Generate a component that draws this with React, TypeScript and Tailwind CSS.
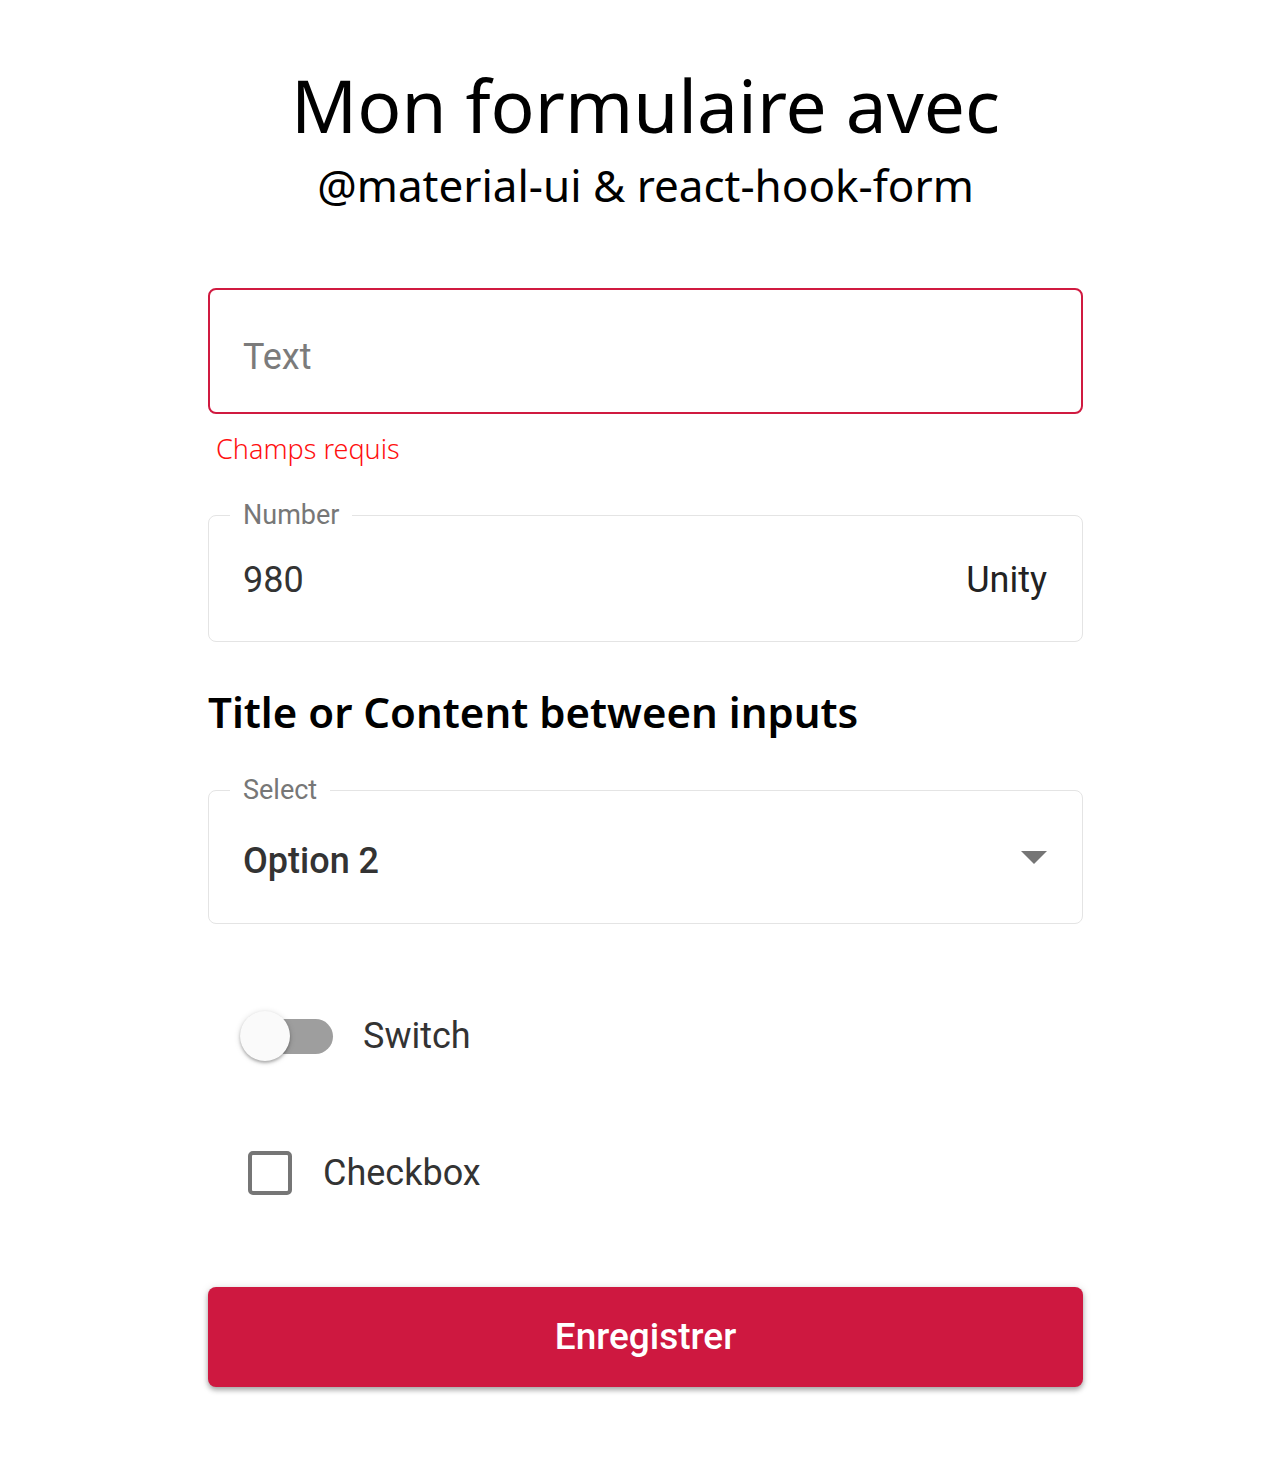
import React from "react";

const seg = { fontFamily: '"Noto Sans", "Open Sans", sans-serif' };
const rob = { fontFamily: 'Roboto, "Liberation Sans", sans-serif' };

function Outlined({
  label,
  children,
  className,
}: {
  label: string;
  children: React.ReactNode;
  className: string;
}) {
  return (
    <div className={"relative rounded-[8px] border border-[#e4e4e4] " + className}>
      <span
        className="absolute -top-[17px] left-[21px] bg-white px-[13px] text-[27px] leading-[32px] text-[#777777]"
        style={rob}
      >
        {label}
      </span>
      {children}
    </div>
  );
}

export default function App() {
  return (
    <div className="min-h-[1477px] w-full bg-white">
      <div className="ml-[208px] w-[875px] pt-[59px]">
        <h1 className="text-center text-[73px] leading-[92px] text-black" style={seg}>
          Mon formulaire avec
        </h1>
        <h2 className="mt-[8px] text-center text-[44px] leading-[52px] text-black" style={seg}>
          @material-ui &amp; react-hook-form
        </h2>

        <div className="mt-[77px] flex h-[126px] items-center rounded-[8px] border-2 border-[#d01a40] pl-[33px] pt-[12px]">
          <span className="text-[36px] text-[#7b7b7b]" style={rob}>
            Text
          </span>
        </div>
        <div className="mt-[17px] pl-[8px] text-[27px] font-light leading-[36px] text-[#ff1010]" style={seg}>
          Champs requis
        </div>

        <Outlined label="Number" className="mt-[48px] flex h-[127px] items-center justify-between pl-[34px] pr-[35px] pt-[2px]">
          <span className="text-[36px] text-[#333333]" style={rob}>
            980
          </span>
          <span className="text-[36px] text-[#222222]" style={rob}>
            Unity
          </span>
        </Outlined>

        <h3 className="mt-[42px] text-[42px] font-semibold leading-[56px] text-black" style={seg}>
          Title or Content between inputs
        </h3>

        <Outlined label="Select" className="mt-[50px] flex h-[134px] items-center justify-between pl-[34px] pr-[35px] pt-[8px]">
          <span className="text-[36px] font-medium text-[#333333]" style={rob}>
            Option 2
          </span>
          <svg width="26" height="13" viewBox="0 0 26 13" className="mt-[-8px]">
            <polygon points="0,0 26,0 13,13" fill="#757575" />
          </svg>
        </Outlined>

        <div className="mt-[85px] flex items-center pl-[32px]">
          <div className="relative h-[52px] w-[101px]">
            <div className="absolute left-[28px] top-[9px] h-[35px] w-[65px] rounded-full bg-[#9e9e9e]" />
            <div className="absolute left-0 top-[1px] h-[50px] w-[50px] rounded-full bg-[#fafafa] shadow-[0_2px_3px_rgba(0,0,0,0.25),0_1px_6px_rgba(0,0,0,0.15)]" />
          </div>
          <span className="ml-[22px] text-[36px] text-[#333333]" style={rob}>
            Switch
          </span>
        </div>

        <div className="mt-[83px] flex items-center pl-[40px]">
          <div className="h-[44px] w-[44px] rounded-[5px] border-[4px] border-[#767676]" />
          <span className="ml-[31px] text-[36px] text-[#333333]" style={rob}>
            Checkbox
          </span>
        </div>

        <button
          className="mt-[87px] flex h-[100px] w-full items-center justify-center rounded-[8px] bg-[#ce1840] text-[37px] font-medium text-white shadow-[0_3px_5px_rgba(0,0,0,0.3),0_1px_10px_rgba(0,0,0,0.12)]"
          style={rob}
        >
          Enregistrer
        </button>
      </div>
    </div>
  );
}
